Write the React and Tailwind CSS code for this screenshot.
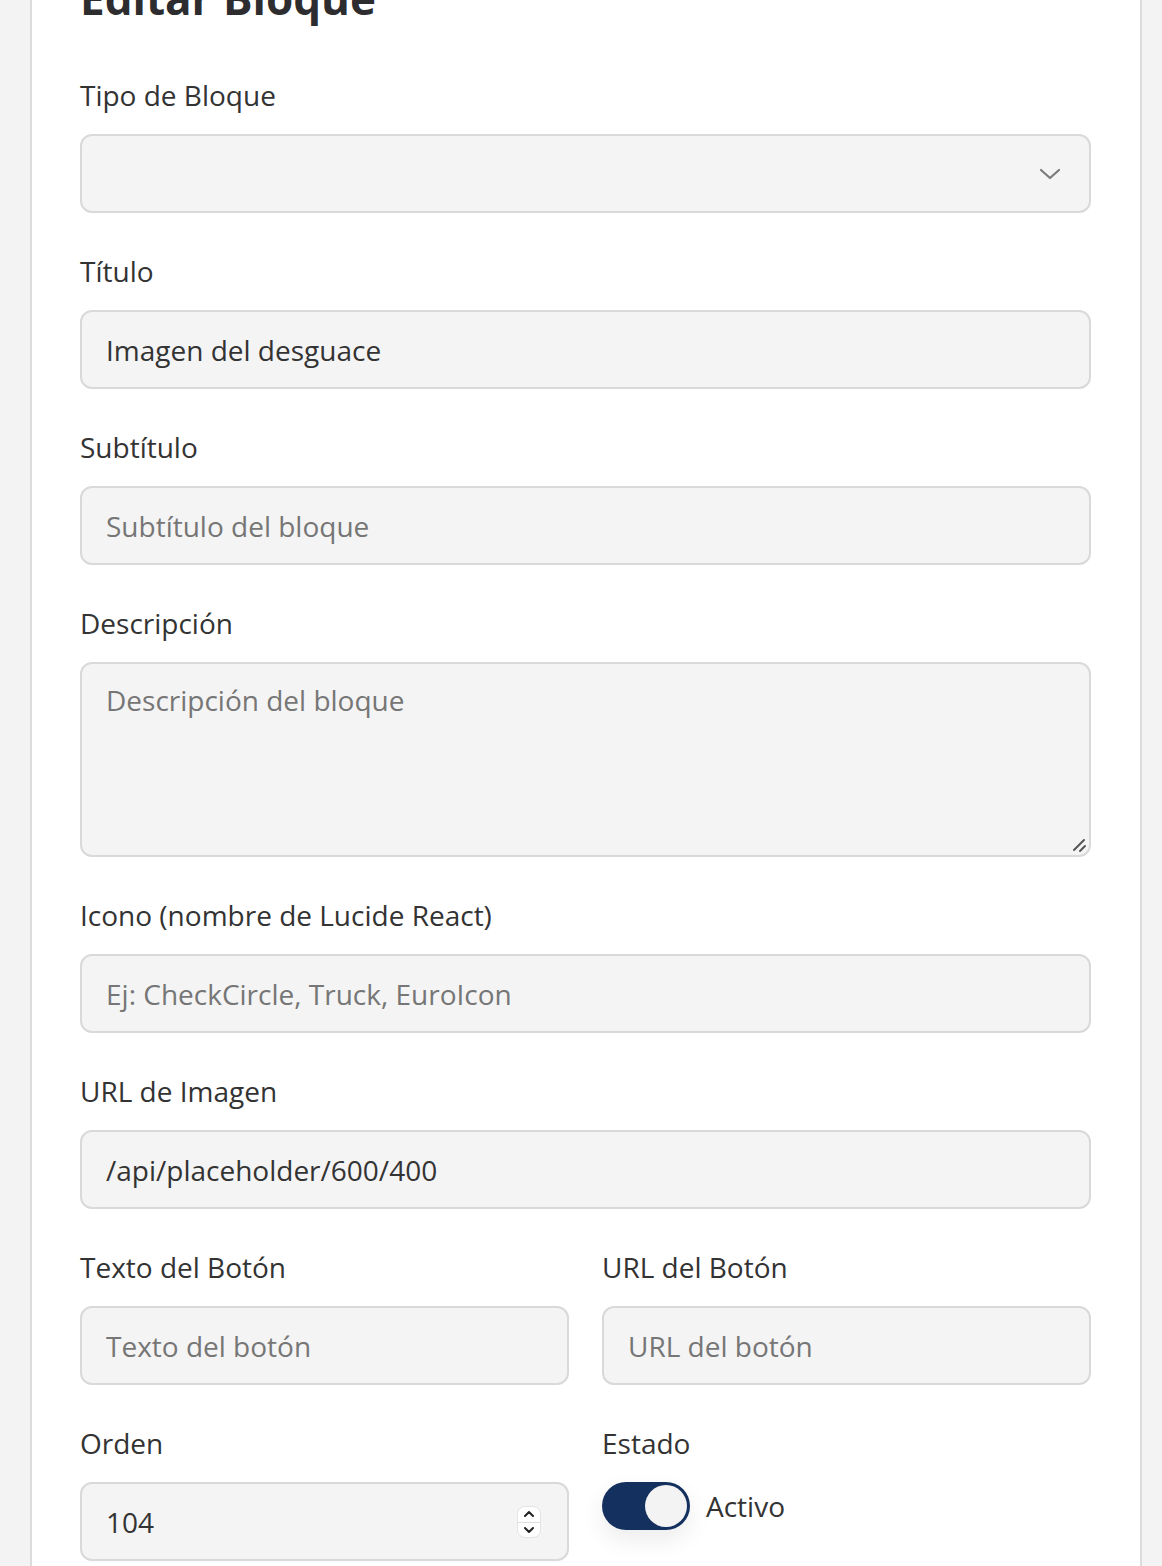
import React from "react";

const font = { fontFamily: '"Open Sans", "Noto Sans", sans-serif' };

const inputClass =
  "block w-full h-[79px] px-[24px] rounded-[12px] border-2 border-[#d9d9d9] bg-[#f4f4f4] text-[28px] text-[#333] placeholder:text-[#767676] outline-none";

const Field = ({ label, children, last }) => (
  <div className={last ? "" : "mb-[38px]"}>
    <label className="block text-[28px] leading-[40px] text-[#333] mb-[19px]">
      {label}
    </label>
    {children}
  </div>
);

const App = () => {
  return (
    <div
      className="h-[1566px] overflow-hidden bg-[#f3f3f3] pl-[30px] pr-[20px]"
      style={font}
    >
      <div className="flow-root h-full bg-white border-x-2 border-[#dcdcdc] pl-[48px] pr-[49px]">
        <h1 className="-mt-[28px] mb-[50px] text-[44px] leading-[53px] font-bold text-[#2d2d30]">
          Editar Bloque
        </h1>

        <Field label="Tipo de Bloque">
          <div className="relative">
            <div className="h-[79px] rounded-[12px] border-2 border-[#d9d9d9] bg-[#f4f4f4]" />
            <svg
              className="absolute right-[30px] top-1/2 -translate-y-1/2"
              width="22"
              height="14"
              viewBox="0 0 22 14"
              fill="none"
            >
              <path
                d="M2 3l9 8 9-8"
                stroke="#7a7a7a"
                strokeWidth="2.2"
                strokeLinecap="round"
                strokeLinejoin="round"
              />
            </svg>
          </div>
        </Field>

        <Field label="Título">
          <input className={inputClass} defaultValue="Imagen del desguace" />
        </Field>

        <Field label="Subtítulo">
          <input className={inputClass} placeholder="Subtítulo del bloque" />
        </Field>

        <Field label="Descripción">
          <div className="relative">
            <textarea
              className="block w-full h-[195px] px-[24px] pt-[15px] rounded-[12px] border-2 border-[#d9d9d9] bg-[#f4f4f4] text-[28px] leading-[42px] text-[#333] placeholder:text-[#767676] outline-none resize-none"
              placeholder="Descripción del bloque"
            />
            {/* resize grip */}
            <svg
              className="absolute right-[4px] bottom-[4px] pointer-events-none"
              width="16"
              height="16"
              viewBox="0 0 16 16"
              fill="none"
            >
              <path d="M3 13L13 3M9 14L14 9" stroke="#555" strokeWidth="2" strokeLinecap="round" />
            </svg>
          </div>
        </Field>

        <Field label="Icono (nombre de Lucide React)">
          <input
            className={inputClass}
            placeholder="Ej: CheckCircle, Truck, EuroIcon"
          />
        </Field>

        <Field label="URL de Imagen">
          <input className={inputClass} defaultValue="/api/placeholder/600/400" />
        </Field>

        <div className="grid grid-cols-2 gap-x-[33px]">
          <Field label="Texto del Botón">
            <input className={inputClass} placeholder="Texto del botón" />
          </Field>
          <Field label="URL del Botón">
            <input className={inputClass} placeholder="URL del botón" />
          </Field>

          <Field label="Orden" last>
            <div className="relative">
              <input className={inputClass} defaultValue="104" />
              <div className="absolute right-[28px] top-[24px] w-[24px] h-[32px] rounded-[8px] bg-white border border-[#e4e4e4] flex flex-col">
                <div className="flex-1 flex items-center justify-center border-b border-[#dedede]">
                  <svg width="12" height="8" viewBox="0 0 12 8" fill="none">
                    <path
                      d="M2 6l4-4 4 4"
                      stroke="#222"
                      strokeWidth="2"
                      strokeLinecap="round"
                      strokeLinejoin="round"
                    />
                  </svg>
                </div>
                <div className="flex-1 flex items-center justify-center">
                  <svg width="12" height="8" viewBox="0 0 12 8" fill="none">
                    <path
                      d="M2 2l4 4 4-4"
                      stroke="#222"
                      strokeWidth="2"
                      strokeLinecap="round"
                      strokeLinejoin="round"
                    />
                  </svg>
                </div>
              </div>
            </div>
          </Field>

          <Field label="Estado" last>
            <div className="flex items-center gap-[16px]">
              <div className="relative w-[88px] h-[48px] rounded-full bg-[#14305e] shadow-[0_10px_24px_rgba(0,0,0,0.08)]">
                <div className="absolute right-[3px] top-[3px] w-[42px] h-[42px] rounded-full bg-[#f3f3f3]" />
              </div>
              <span className="text-[28px] leading-[42px] text-[#333]">
                Activo
              </span>
            </div>
          </Field>
        </div>
      </div>
    </div>
  );
};

export default App;
